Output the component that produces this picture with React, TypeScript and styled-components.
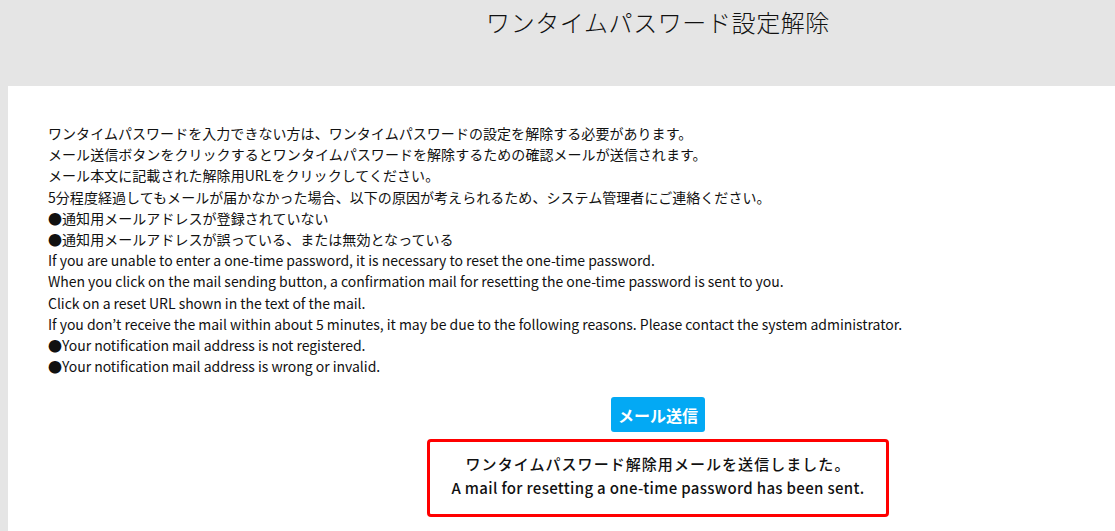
import React from 'react'
import styled, { createGlobalStyle } from 'styled-components'

const GlobalStyle = createGlobalStyle`
    html, body {
        margin: 0;
        padding: 0;
        background: #e5e5e5;
        overflow: hidden;
    }
    body {
        font-family: "Noto Sans CJK JP", "Noto Sans", sans-serif;
        color: #111;
    }
`

const ViewportStyle = styled.div`
    width: 100vw;
    height: 100vh;
    overflow: hidden;
`

const PageStyle = styled.div`
    width: 1316px;
`

const HeaderStyle = styled.header`
    height: 86px;
    display: flex;
    justify-content: center;
    background: #e5e5e5;
`

const TitleStyle = styled.h1`
    margin: 6px 0 0;
    font-size: 24px;
    font-weight: 300;
    letter-spacing: 0.6px;
    line-height: 32px;
    color: #111;
`

const PanelStyle = styled.main`
    margin: 0 8px;
    padding: 37px 40px 14px;
    background: #fff;
    display: flex;
    flex-direction: column;
`

const NoticeStyle = styled.div`
    font-size: 14px;
    line-height: 21.2px;
`

const NoticeLine = styled.div<{ $latin?: boolean }>`
    letter-spacing: ${(p) => (p.$latin ? '-0.03px' : '0.05px')};
    white-space: nowrap;
`

const ActionsStyle = styled.div`
    display: flex;
    flex-direction: column;
    align-items: center;
    gap: 7px;
    margin-top: 20px;
`

const SendButton = styled.button`
    height: 35px;
    padding: 0 7px;
    border: none;
    border-radius: 3px;
    background: #03a9f4;
    color: #fff;
    font-family: inherit;
    font-size: 16px;
    font-weight: 700;
    cursor: pointer;
`

const MessageStyle = styled.div`
    width: 456px;
    padding: 10px 0 14px;
    border: 3px solid #f00;
    border-radius: 4px;
    text-align: center;
    font-size: 15px;
    font-weight: 500;
    line-height: 24px;
`

const MessageLine = styled.div<{ $latin?: boolean }>`
    letter-spacing: ${(p) => (p.$latin ? '0.33px' : '1.05px')};
`

const notices = [
    'ワンタイムパスワードを入力できない方は、ワンタイムパスワードの設定を解除する必要があります。',
    'メール送信ボタンをクリックするとワンタイムパスワードを解除するための確認メールが送信されます。',
    'メール本文に記載された解除用URLをクリックしてください。',
    '5分程度経過してもメールが届かなかった場合、以下の原因が考えられるため、システム管理者にご連絡ください。',
    '●通知用メールアドレスが登録されていない',
    '●通知用メールアドレスが誤っている、または無効となっている',
]

const englishNotices = [
    'If you are unable to enter a one-time password, it is necessary to reset the one-time password.',
    'When you click on the mail sending button, a confirmation mail for resetting the one-time password is sent to you.',
    'Click on a reset URL shown in the text of the mail.',
    'If you don\u2019t receive the mail within about 5 minutes, it may be due to the following reasons. Please contact the system administrator.',
    '●Your notification mail address is not registered.',
    '●Your notification mail address is wrong or invalid.',
]

const App = () => {
    return (
        <ViewportStyle>
            <GlobalStyle />
            <PageStyle>
                <HeaderStyle>
                    <TitleStyle>ワンタイムパスワード設定解除</TitleStyle>
                </HeaderStyle>
                <PanelStyle>
                    <NoticeStyle>
                        {notices.map((line) => (
                            <NoticeLine key={line}>{line}</NoticeLine>
                        ))}
                        {englishNotices.map((line) => (
                            <NoticeLine key={line} $latin>
                                {line}
                            </NoticeLine>
                        ))}
                    </NoticeStyle>
                    <ActionsStyle>
                        <SendButton>メール送信</SendButton>
                        <MessageStyle>
                            <MessageLine>ワンタイムパスワード解除用メールを送信しました。</MessageLine>
                            <MessageLine $latin>
                                A mail for resetting a one-time password has been sent.
                            </MessageLine>
                        </MessageStyle>
                    </ActionsStyle>
                </PanelStyle>
            </PageStyle>
        </ViewportStyle>
    )
}

export default App
